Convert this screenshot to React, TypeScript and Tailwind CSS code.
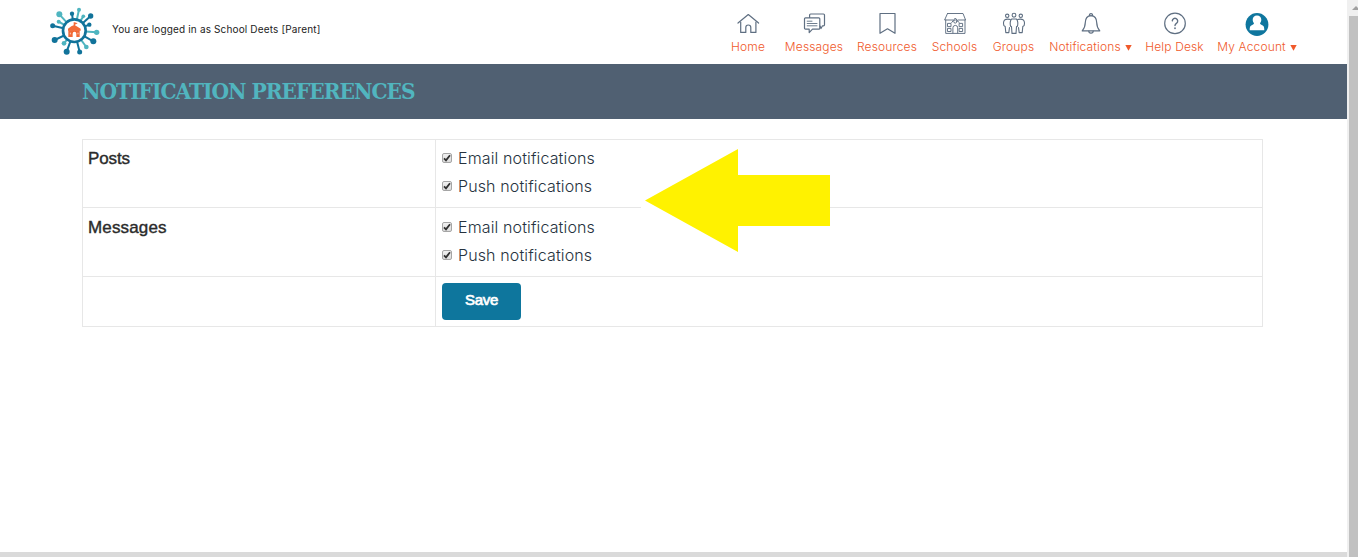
import React from 'react';

const slate = '#5f6f82';

type IconProps = { children: React.ReactNode };

function Icon({ children }: IconProps) {
  return (
    <svg width="24" height="24" viewBox="0 0 24 24" fill="none" stroke={slate} strokeWidth="1.2"
      strokeLinecap="round" strokeLinejoin="round">
      {children}
    </svg>
  );
}

const HomeIcon = () => (
  <Icon>
    <path d="M2 11 L12.3 2.5 L22.6 11" />
    <path d="M4.7 10 V20.4 H9.8 V15.5 a2.5 2.5 0 0 1 5 0 V20.4 H19.9 V10" />
  </Icon>
);

const MessagesIcon = () => (
  <Icon>
    <path d="M7.6 5.5 V3 a1 1 0 0 1 1-1 H21.5 a1 1 0 0 1 1 1 V12.8 a1 1 0 0 1 -1 1 H20.5 L19 16.5 L18 14" />
    <path d="M3.5 5.8 H16.8 a1 1 0 0 1 1 1 V16.2 a1 1 0 0 1 -1 1 H10.5 L7.2 20.6 V17.2 H3.5 a1 1 0 0 1 -1 -1 V6.8 a1 1 0 0 1 1 -1 Z" />
    <path d="M5.2 9.2 H10 M5.2 11.5 H15 M5.2 13.8 H15" strokeWidth="0.9" />
  </Icon>
);

const ResourcesIcon = () => (
  <Icon>
    <path d="M5 1.5 H20 V21.3 L12.5 16.8 L5 21.3 Z" />
  </Icon>
);

const SchoolsIcon = () => (
  <Icon>
    <g strokeWidth="0.95">
      <path d="M4.5 1.5 H20 L22.6 8 H15 M10 8 H1.6 L4.5 1.5" />
      <path d="M2.7 8 V21.4 H22 V8" />
      <path d="M8.7 10.5 L12.3 6 L16 10.5" />
      <circle cx="12.3" cy="9.5" r="1.6" />
      <path d="M4.9 11.4 H8 V14.6 H4.9 Z M16.5 11.4 H19.6 V14.6 H16.5 Z M4.9 16.4 H8 V19.5 H4.9 Z M16.5 16.4 H19.6 V19.5 H16.5 Z" />
      <path d="M9.9 21 V15.8 a2.4 2.4 0 0 1 4.8 0 V21" />
    </g>
  </Icon>
);

const GroupsIcon = () => (
  <Icon>
    <g strokeWidth="1.1">
      <circle cx="5.2" cy="3.8" r="1.7" />
      <circle cx="12" cy="3.2" r="1.9" />
      <circle cx="18.8" cy="3.8" r="1.7" />
      <path d="M8.3 7.600 C7 6.900 4 6.900 3 7.700 C1.600 9 1.400 12 1.900 13.600 L3.200 14.500 L3.800 20.600 H6.800 L7.500 15.500" />
      <path d="M15.700 7.600 C17 6.900 20 6.900 21 7.700 C22.400 9 22.600 12 22.100 13.600 L20.800 14.500 L20.200 20.600 H17.200 L16.500 15.500" />
      <path d="M9.7 7 H14.3 C16 8 16 12 15.5 14 L14.5 14.8 L14 21.4 H10 L9.5 14.8 L8.5 14 C8 12 8 8 9.7 7 Z" />
    </g>
  </Icon>
);

const BellIcon = () => (
  <Icon>
    <path d="M10.6 3.600 a1.5 1.5 0 1 1 2.8 0" />
    <path d="M12 3.6 C8 3.8 6.4 7 6.3 10.5 C6.2 14.5 5.4 16.5 3.2 18.8 H20.8 C18.6 16.5 17.8 14.5 17.7 10.5 C17.6 7 16 3.8 12 3.6 Z" />
    <path d="M9.8 19 a2.2 2.2 0 0 0 4.4 0" />
  </Icon>
);

const HelpIcon = () => (
  <Icon>
    <circle cx="12" cy="11.4" r="10.3" />
    <path d="M9.3 8.9 a2.7 2.7 0 1 1 4.3 2.3 C12.4 12 12 12.4 12 13.6" strokeWidth="1.4" />
    <path d="M12 16.1 V16.3" strokeWidth="1.7" />
  </Icon>
);

const AccountIcon = () => (
  <svg width="24" height="24" viewBox="0 0 24 24">
    <circle cx="12" cy="12.5" r="11.4" fill="#0f769e" />
    <path d="M12 3.500 c2.700 0 4.300 1.800 4.300 4.300 c0 1.500 -.600 2.600 -1.300 3.500 c.200 .900 .700 1.200 1.700 1.600 c2 .800 2.600 1.700 2.600 5.300 H4.700 c0 -3.600 .600 -4.500 2.600 -5.300 c1 -.400 1.500 -.700 1.700 -1.600 C8.300 10.400 7.700 9.300 7.700 7.800 c0 -2.500 1.600 -4.300 4.300 -4.300 Z" fill="#fff" />
  </svg>
);

const navItems = [
  { label: 'Home', icon: <HomeIcon />, box: 'w-[34px]' },
  { label: 'Messages', icon: <MessagesIcon />, box: 'w-[58px] ml-5' },
  { label: 'Resources', icon: <ResourcesIcon />, box: 'w-[60px] ml-[14px]' },
  { label: 'Schools', icon: <SchoolsIcon />, box: 'w-[45px] ml-[15px]' },
  { label: 'Groups', icon: <GroupsIcon />, box: 'w-[41px] ml-4' },
  { label: 'Notifications', icon: <BellIcon />, box: 'w-[81px] ml-4', menu: true },
  { label: 'Help Desk', icon: <HelpIcon />, box: 'w-[59px] ml-[14px]' },
  { label: 'My Account', icon: <AccountIcon />, box: 'w-[80px] ml-[13px]', menu: true },
];

// [x, y, radius, is light]
const spokes: [number, number, number, boolean][] = [
  [58, 43, 9, true], [117, 29, 6, true], [130, 49, 5.5, true], [56, 65, 6, true],
  [170, 97, 8, true], [72, 130, 7, true], [139, 141, 7, true],
  [96, 41, 6.5, false], [152, 48, 8, false], [148, 74, 6.5, false], [38, 77, 7.5, false],
  [44, 120, 9, false], [80, 155, 9, false], [119, 156, 7.5, false], [160, 124, 9, false],
];

function Logo() {
  return (
    <svg width="70" height="64" viewBox="0 0 210 192">
      {spokes.map(([x, y, r, light]) => (
        <g key={`${x}-${y}`} stroke={light ? '#4fb5c0' : '#11739a'} fill={light ? '#4fb5c0' : '#11739a'}>
          <line x1="103" y1="92" x2={x} y2={y} strokeWidth="6" />
          <circle cx={x} cy={y} r={r} stroke="none" />
        </g>
      ))}
      <circle cx="103" cy="92" r="34" fill="#fff" stroke="#11739a" strokeWidth="8" />
      <path d="M84 86 L94 79 L101 76 V67 H104 L113 70 L105 74 V76 L122 86 V92 H84 Z" fill="#f26a36" />
      <path d="M85 91 H119 V111 H109 V101 a5.500 5.500 0 0 0 -11 0 V111 H85 Z" fill="#f26a36" />
      <path d="M91 98 V103 M114 98 V103" stroke="#fff" strokeWidth="2" />
    </svg>
  );
}

function Option({ label }: { label: string }) {
  return (
    <label className="flex h-7 items-center">
      <span className="flex size-[10px] items-center justify-center rounded-[2px] border border-[#a5a5a5] bg-linear-to-b from-[#f0f0f0] to-[#dcdcdc]">
        <svg width="8" height="8" viewBox="0 0 8 8" fill="none" stroke="#2f2f2f" strokeWidth="1.8">
          <path d="M1 4.300 L3 6.300 L7 1.300" />
        </svg>
      </span>
      <span className="ml-[6px] whitespace-nowrap font-['Inter',sans-serif] text-[16px] font-light tracking-[0.13px] text-[#26323e]">{label}</span>
    </label>
  );
}

function Row({ title, titleClass, optionsClass }: { title: string; titleClass: string; optionsClass: string }) {
  return (
    <>
      <div className={`border-r border-b border-[#e7e7e7] pl-[5px] text-[17px] leading-[26px] text-[#2b2b2b] [-webkit-text-stroke:0.4px_#2b2b2b] ${titleClass}`}>
        {title}
      </div>
      <div className={`border-r border-b border-[#e7e7e7] pl-[6px] ${optionsClass}`}>
        <Option label="Email notifications" />
        <Option label="Push notifications" />
      </div>
    </>
  );
}

export default function App() {
  return (
    <div className="flex h-[557px] w-[1358px] overflow-hidden bg-white font-['Liberation_Sans',Arial,sans-serif]">

      <div className="flex w-[1347px] flex-col">

        {/* Top bar */}
        <header className="flex h-16 pl-10">
          <Logo />
          <p className="ml-[2px] w-[300px] pt-[22px] font-['Inter',sans-serif] text-[10px] leading-[15px] tracking-[0.15px] text-[#222]">
            You are logged in as School Deets [Parent]
          </p>
          <nav className="ml-[319px] flex pt-3">
            {navItems.map((item) => (
              <a key={item.label} className={`flex shrink-0 flex-col items-center ${item.box}`}>
                {item.icon}
                <span className="mt-[3px] flex items-center whitespace-nowrap font-['Inter',sans-serif] text-[12px] leading-4 font-light tracking-[0.15px] text-[#f0592b]">
                  {item.label}
                  {item.menu && (
                    <svg className="ml-1" width="7" height="7" viewBox="0 0 7 7">
                      <path d="M0.300 1 H6.700 L3.500 6.800 Z" fill="#f0592b" />
                    </svg>
                  )}
                </span>
              </a>
            ))}
          </nav>
        </header>

        {/* Page title */}
        <div className="h-[55px] bg-[#506072] pl-[82px]">
          <h1 className="whitespace-nowrap pt-[11px] font-['DejaVu_Serif_Condensed','DejaVu_Serif',serif] text-[22.5px] leading-8 font-bold tracking-[-1.02px] text-[#51b5bf]">
            NOTIFICATION PREFERENCES
          </h1>
        </div>

        {/* Preferences table */}
        <main className="relative mt-5 ml-[82px] grid w-[1181px] grid-cols-[353px_1fr] grid-rows-[68px_69px_50px] border-t border-l border-[#e7e7e7]">
          <Row title="Posts" titleClass="pt-[6px] tracking-[-0.1px]" optionsClass="pt-1" />
          <Row title="Messages" titleClass="pt-[7px] tracking-[0.15px]" optionsClass="pt-[5px]" />
          <div className="border-r border-b border-[#e7e7e7]"></div>
          <div className="border-r border-b border-[#e7e7e7] pt-[6px] pl-[6px]">
            <button className="h-[37px] w-[79px] rounded-[4px] bg-[#0e769d] pb-[2px] text-[15px] tracking-[-0.35px] text-white [-webkit-text-stroke:0.7px_#fff]">
              Save
            </button>
          </div>

          {/* Pointer over the options */}
          <svg className="absolute top-[9px] left-[558px]" width="189" height="104" viewBox="0 0 189 104">
            <path d="M0 0 H189 V104 H0 Z" fill="#fff" />
            <path d="M4 51.500 L97 0 V26 H189 V77 H97 V103 Z" fill="#fff200" />
          </svg>
        </main>

        <div className="mt-auto h-[5px] bg-[#dadada]"></div>

      </div>

      {/* Scrollbar */}
      <div className="flex w-[11px] flex-col bg-[#f0f0f0] pl-[2px]">
        <div className="flex h-4 items-center justify-end">
          <svg width="6" height="4" viewBox="0 0 6 4">
            <path d="M0 4 L4 0 L8 4 Z" fill="#a0a0a0" />
          </svg>
        </div>
        <div className="flex-1 bg-[#c1c1c1]"></div>
      </div>

    </div>
  );
}
